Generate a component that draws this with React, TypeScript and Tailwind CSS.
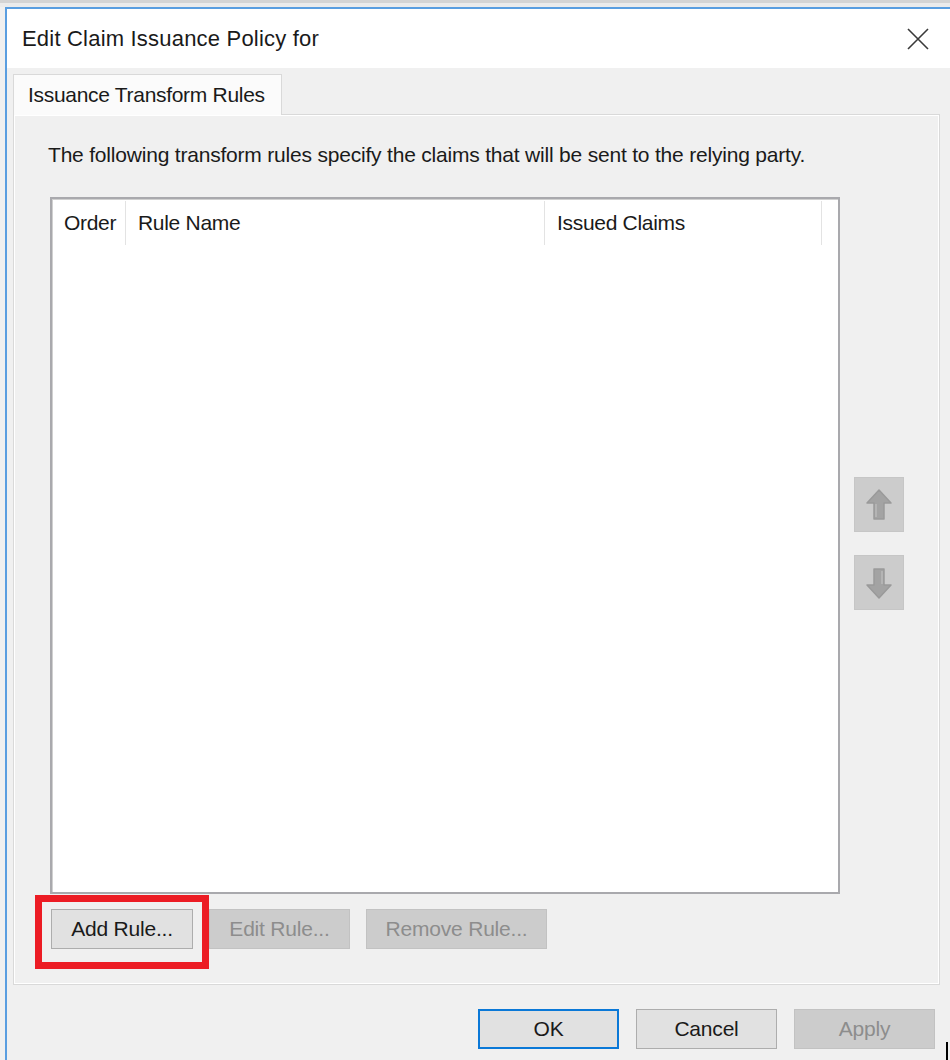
import React from "react";

const font = { fontFamily: '"Liberation Sans", Arial, sans-serif' };

function ArrowIcon({ down = false }: { down?: boolean }) {
  return (
    <svg width="28" height="34" viewBox="0 0 28 34" className={down ? "rotate-180" : ""}>
      <path
        d="M14 2 L26 15 L19 15 L19 31 L9 31 L9 15 L2 15 Z"
        fill="#a3a3a3"
        stroke="#9a9a9a"
        strokeWidth="1.5"
        strokeLinejoin="round"
      />
      <path d="M11 16 L11 29" stroke="#b4b4b4" strokeWidth="2" />
    </svg>
  );
}

function WinButton({
  label,
  width,
  disabled = false,
  primary = false,
}: {
  label: string;
  width: string;
  disabled?: boolean;
  primary?: boolean;
}) {
  const base = "h-[40px] flex items-center justify-center text-[21px] tracking-[-0.2px]";
  let look = "bg-[#e1e1e1] border border-[#adadad] text-[#1a1a1a]";
  if (disabled) look = "bg-[#cccccc] border border-[#c2c2c2] text-[#8d8d8d]";
  if (primary) look = "bg-[#e1e1e1] border-2 border-[#0a78d7] text-[#1a1a1a]";
  return <div className={`${base} ${look} ${width}`}>{label}</div>;
}

export default function App() {
  return (
    <div className="relative w-[950px] h-[1060px] bg-[#f0f0f0] overflow-hidden" style={font}>
      <div className="h-[3px] bg-[#d4d4d4]" />
      <div className="h-[4px] bg-[#ebebeb]" />
      <div className="ml-[5px] border-l-2 border-t-2 border-[#5a9ee0] h-[1053px] bg-[#f0f0f0]">
        {/* title bar */}
        <div className="h-[59px] bg-white flex items-center justify-between pl-[15px] pr-[20px]">
          <span className="text-[22px] text-[#1a1a1a] tracking-[0.2px]">Edit Claim Issuance Policy for</span>
          <svg width="24" height="24" viewBox="0 0 24 24">
            <path d="M2 2 L22 22 M22 2 L2 22" stroke="#3a3a3a" strokeWidth="1.6" />
          </svg>
        </div>

        {/* tabs */}
        <div className="pt-[6px] pl-[6px]">
          <div className="relative z-10 -mb-px w-[269px] h-[41px] bg-[#fbfbfb] border border-b-0 border-[#d9d9d9] flex items-center pl-[14px]">
            <span className="text-[21px] text-[#1a1a1a] tracking-[-0.3px]">Issuance Transform Rules</span>
          </div>
          <div className="w-[927px] h-[871px] border border-[#d9d9d9] bg-[#f0f0f0]">
            <div className="h-full border border-white flex flex-col">
              <p className="pl-[33px] pt-[27px] text-[21px] leading-[24px] text-[#1a1a1a] tracking-[-0.2px]">
                The following transform rules specify the claims that will be sent to the relying party.
              </p>

              <div className="flex mt-[30px] ml-[35px]">
                {/* list view */}
                <div className="w-[790px] h-[697px] bg-white border-2 border-[#a9a9ad] shadow-[inset_1px_1px_0_#d0d0d0]">
                  <div className="flex h-[48px] items-center text-[21px] text-[#1a1a1a] tracking-[-0.3px]">
                    <div className="w-[74px] h-[44px] flex items-center pl-[12px] border-r border-[#e3e3e3]">Order</div>
                    <div className="w-[419px] h-[44px] flex items-center pl-[12px] border-r border-[#e3e3e3]">Rule Name</div>
                    <div className="w-[277px] h-[44px] flex items-center pl-[12px] border-r border-[#e3e3e3]">Issued Claims</div>
                  </div>
                </div>

                {/* move buttons */}
                <div className="ml-[14px] pt-[280px] flex flex-col gap-[23px]">
                  <div className="w-[50px] h-[55px] bg-[#cccccc] border border-[#c6c6c6] flex items-center justify-center">
                    <ArrowIcon />
                  </div>
                  <div className="w-[50px] h-[55px] bg-[#cccccc] border border-[#c6c6c6] flex items-center justify-center">
                    <ArrowIcon down />
                  </div>
                </div>
              </div>

              <div className="flex mt-[15px] ml-[36px] gap-[16px]">
                <div className="relative">
                  <WinButton label="Add Rule..." width="w-[142px]" />
                  <div className="absolute -left-[16px] -right-[16px] -top-[14px] -bottom-[20px] border-[7px] border-[#ec1c24]" />
                </div>
                <WinButton label="Edit Rule..." width="w-[141px]" disabled />
                <WinButton label="Remove Rule..." width="w-[181px]" disabled />
              </div>
            </div>
          </div>
        </div>

        {/* footer */}
        <div className="flex justify-end gap-[17px] pr-[15px] pt-[24px]">
          <WinButton label="OK" width="w-[141px]" primary />
          <WinButton label="Cancel" width="w-[141px]" />
          <WinButton label="Apply" width="w-[141px]" disabled />
        </div>
      </div>

      <div className="absolute left-[946px] top-[1042px] w-[2px] h-[18px] bg-black" />
    </div>
  );
}
